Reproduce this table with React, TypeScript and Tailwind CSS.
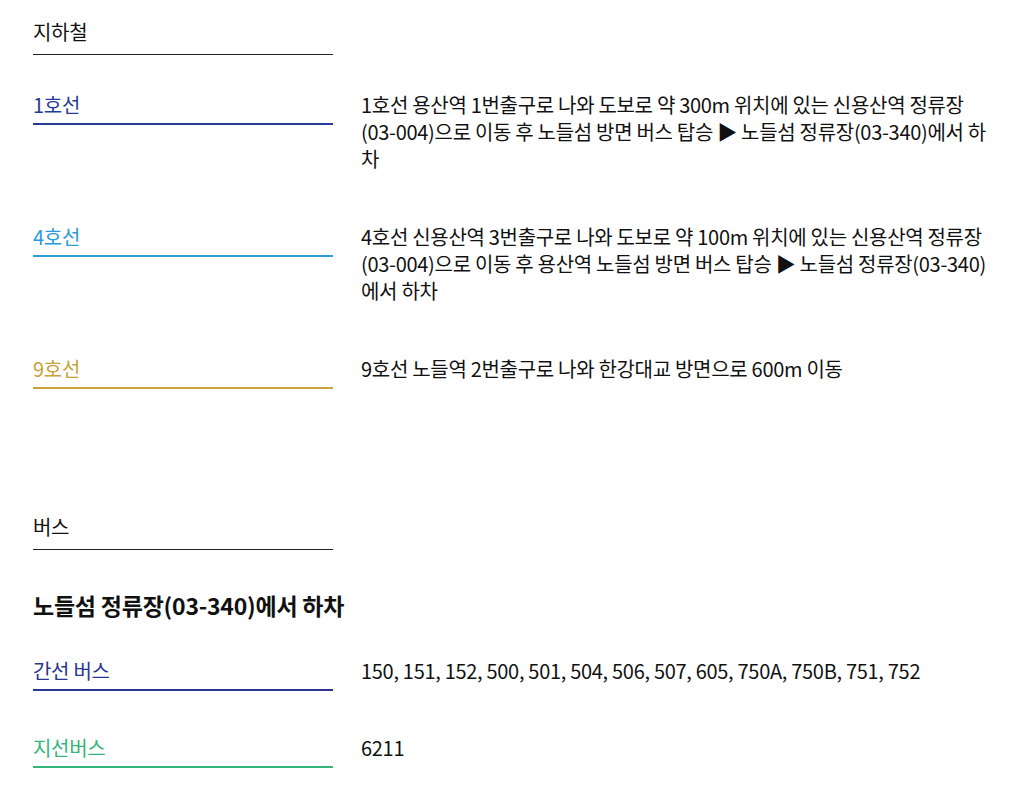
const font = { fontFamily: '"Noto Sans CJK KR", "Noto Sans", sans-serif' };

type Row = {
  label: string;
  color: string;
  border: string;
  text: string;
};

const subway: Row[] = [
  {
    label: "1호선",
    color: "text-[#263c96]",
    border: "border-[#263c96]",
    text: "1호선 용산역 1번출구로 나와 도보로 약 300m 위치에 있는 신용산역 정류장 (03-004)으로 이동 후 노들섬 방면 버스 탑승 ▶ 노들섬 정류장(03-340)에서 하차",
  },
  {
    label: "4호선",
    color: "text-[#2b9bda]",
    border: "border-[#2b9bda]",
    text: "4호선 신용산역 3번출구로 나와 도보로 약 100m 위치에 있는 신용산역 정류장 (03-004)으로 이동 후 용산역 노들섬 방면 버스 탑승 ▶ 노들섬 정류장(03-340) 에서 하차",
  },
  {
    label: "9호선",
    color: "text-[#c9a23a]",
    border: "border-[#c9a23a]",
    text: "9호선 노들역 2번출구로 나와 한강대교 방면으로 600m 이동",
  },
];

const buses: Row[] = [
  {
    label: "간선 버스",
    color: "text-[#2a3590]",
    border: "border-[#2a3590]",
    text: "150, 151, 152, 500, 501, 504, 506, 507, 605, 750A, 750B, 751, 752",
  },
  {
    label: "지선버스",
    color: "text-[#34b57a]",
    border: "border-[#34b57a]",
    text: "6211",
  },
];

function SectionTitle({ children }: { children: string }) {
  return (
    <div className="w-[300px] border-b border-[#222] pb-[9px] text-[20px] leading-[27px] tracking-[-0.015em] text-[#111]">
      {children}
    </div>
  );
}

function InfoRow({ row }: { row: Row }) {
  return (
    <div className="flex gap-[28px]">
      <div className={`w-[300px] shrink-0 self-start border-b-2 pb-[5px] text-[20px] leading-[27px] tracking-[-0.015em] ${row.color} ${row.border}`}>
        {row.label}
      </div>
      <p className="w-[632px] text-[20px] leading-[27px] tracking-[-0.015em] text-[#111]">{row.text}</p>
    </div>
  );
}

export default function App() {
  return (
    <div className="min-h-screen bg-white px-[33px] pt-[18px]" style={font}>
      <section>
        <SectionTitle>지하철</SectionTitle>
        <div className="mt-[36px] flex flex-col gap-[51px]">
          {subway.map((row) => (
            <InfoRow key={row.label} row={row} />
          ))}
        </div>
      </section>

      <section className="mt-[124px]">
        <SectionTitle>버스</SectionTitle>
        <h3 className="mt-[39px] text-[23px] font-bold leading-[32px] tracking-[-0.01em] text-[#111]">
          노들섬 정류장(03-340)에서 하차
        </h3>
        <div className="mt-[36px] flex flex-col gap-[43px]">
          {buses.map((row) => (
            <InfoRow key={row.label} row={row} />
          ))}
        </div>
      </section>
    </div>
  );
}
